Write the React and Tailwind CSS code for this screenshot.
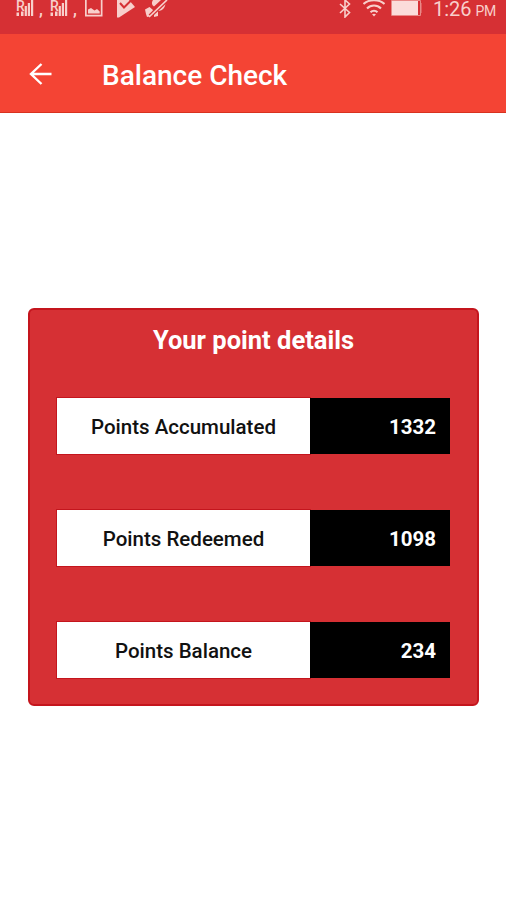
const POINTS = [
  { label: 'Points Accumulated', value: 1332 },
  { label: 'Points Redeemed', value: 1098 },
  { label: 'Points Balance', value: 234 },
];

function SignalIcon() {
  return (
    <span className="relative flex h-4 w-[18px]">
      <span className="text-[14px] leading-[12px] font-medium">R</span>
      <svg className="absolute inset-0" width="18" height="17" viewBox="0 0 18 17" fill="currentColor">
        <path d="M.5 12.500h2.500v3.500H.5zM5 11.500h2.500v4.500H5zM8.700 6h2.200v10H8.700zM11.800 3h2.200v13h-2.200zM15 0h2.200v16H15z" />
      </svg>
    </span>
  );
}

function PictureIcon() {
  return (
    <svg width="18" height="17" viewBox="0 0 18 17" fill="currentColor">
      <path fillRule="evenodd" d="M0 0h17.500v16.500H0zM1.700 0v14.800h14.100V0z" />
      <path d="M3 13.500V9.500L6 8l3.500 2.500L12 9l2.700 2.500v2z" />
    </svg>
  );
}

function PlayCheckIcon() {
  return (
    <svg width="18" height="18" viewBox="0 0 18 18">
      <path fill="currentColor" d="M0 0h12l6 7L2 17.500H0z" />
      <path d="M3 3 7 7.500 14.500 0" fill="none" stroke="#d63034" strokeWidth="2" />
    </svg>
  );
}

function MicOffIcon() {
  return (
    <svg width="23" height="18" viewBox="0 0 23 18" fill="none" stroke="currentColor">
      <path fill="currentColor" stroke="none" d="M8 0h8L9 6.500C6.500 5 6.500 2 8 0zM0 9.500 4.500 7 8 10l-2 6-4 1-1-3zM12 10l8-8c1.500 4-2 9-7 9zM9 12l4-1v5l-4 1z" />
      <path d="M21.500.5 5 16" stroke="#d63034" strokeWidth="4" />
      <path d="M22 0 4 17" strokeWidth="1.700" />
    </svg>
  );
}

function BluetoothIcon() {
  return (
    <svg width="12" height="18" viewBox="0 0 12 18" fill="none" stroke="currentColor" strokeWidth="1.600">
      <path d="m1 4 9.500 8.500L6 17V0l4.500 4L1 13" />
    </svg>
  );
}

function WifiIcon() {
  return (
    <svg width="22" height="17" viewBox="0 0 22 17" fill="none" stroke="currentColor" strokeWidth="2.100">
      <path d="M.5 4C6-1 16-1 21.500 4M4 8.500c4-4 10-4 14 0M7.500 12.300c2-2 5-2 7 0" />
      <path fill="currentColor" stroke="none" d="m9 14.300 2 2.200 2-2.200q-2-1.200-4 0z" />
    </svg>
  );
}

function BatteryIcon() {
  return (
    <svg width="31" height="16" viewBox="0 0 31 16">
      <path d="M.5.5h29v15H.5z" fill="none" stroke="#e98a88" />
      <path d="M1 1h26v14H1z" fill="#fbdcda" />
      <path d="M29 3h1.500v10H29z" fill="#e98a88" />
    </svg>
  );
}

function StatusBar() {
  return (
    <div className="flex h-[34px] items-start justify-between bg-[#d63034] pr-[10px] pl-4 text-[#f8cfcb]">
      <div className="flex items-start">
        <SignalIcon />
        <span className="w-4 pl-[5px] text-[16px] leading-[20px] font-bold">,</span>
        <SignalIcon />
        <span className="w-[17px] pl-[5px] text-[16px] leading-[20px] font-bold">,</span>
        <PictureIcon />
        <div className="ml-[14px]"><PlayCheckIcon /></div>
        <div className="ml-[10px]"><MicOffIcon /></div>
      </div>
      <div className="flex items-start">
        <BluetoothIcon />
        <div className="ml-3"><WifiIcon /></div>
        <div className="ml-[6px]"><BatteryIcon /></div>
        <div className="ml-[11px] flex items-baseline gap-[4px] leading-[19px]">
          <span className="text-[20px]">1:26</span>
          <span className="text-[14px] tracking-[-0.3px]">PM</span>
        </div>
      </div>
    </div>
  );
}

function AppBar() {
  return (
    <header className="flex h-[79px] items-center border-b border-[#d8321f] bg-[#f44434] pl-[29px] text-white">
      <button aria-label="Back">
        <svg width="23" height="24" viewBox="0 0 23 24" fill="none" stroke="currentColor" strokeWidth="2.400">
          <path d="M22.500 13H2M12.500 3 2 13l10.500 10" />
        </svg>
      </button>
      <h1 className="ml-[50px] pt-[5px] text-[28px] font-medium">Balance Check</h1>
    </header>
  );
}

function PointRow({ label, value }) {
  return (
    <div className="flex h-14 text-[20.5px] leading-[58px]">
      <div className="w-[253px] bg-white text-center font-medium text-[#111] ring-1 ring-[#c4151d]">{label}</div>
      <div className="relative flex-1 bg-black pr-[14px] text-right font-bold text-white">{value}</div>
    </div>
  );
}

export default function App() {
  return (
    <div className="min-h-[900px] w-full bg-white font-[Roboto,sans-serif]">
      <StatusBar />
      <AppBar />
      <main className="pt-[195px] pr-[27px] pl-7">
        <section className="h-[398px] rounded-[6px] border-2 border-[#c4151d] bg-[#d63034] px-[27px]">
          <h2 className="h-[88px] pt-[12px] text-center text-[25.5px] leading-[36px] font-bold text-white">Your point details</h2>
          <div className="flex flex-col gap-14">
            {POINTS.map(p => <PointRow key={p.label} {...p} />)}
          </div>
        </section>
      </main>
    </div>
  );
}
